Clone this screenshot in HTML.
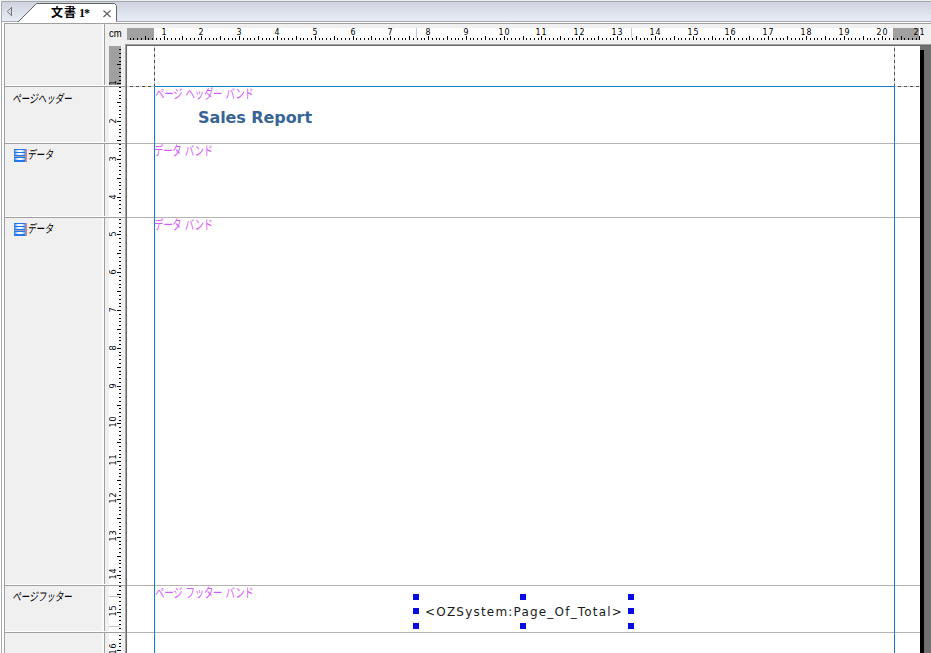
<!DOCTYPE html>
<html lang="ja"><head><meta charset="utf-8"><title>文書 1</title>
<style>
html,body{margin:0;padding:0}
body{width:931px;height:653px;overflow:hidden;background:#fff;position:relative;font-family:"Liberation Sans","Noto Sans CJK JP",sans-serif}
div,span,svg{position:absolute;box-sizing:border-box}
#top0{left:0;top:0;width:931px;height:1px;background:#ececec}
#bl{left:1px;top:1px;width:1px;height:653px;background:#a6aab7}
#bt{left:1px;top:1px;width:931px;height:1px;background:#a6aab7}
#tabbar{left:2px;top:2px;width:931px;height:19px;background:linear-gradient(#cfd3de,#e8ecf5)}
#tabline{left:2px;top:21px;width:931px;height:1px;background:#a6aab7}
#tabsvg{left:0;top:0}
#tabtxt{left:51px;top:3.5px;height:18px;line-height:18px;font-size:12px;letter-spacing:1px;font-weight:bold;color:#000;white-space:nowrap;font-family:"Liberation Serif","Noto Sans CJK JP",sans-serif}
#panel{left:4px;top:23px;width:931px;height:653px;background:#f0f0f0;border-left:1px solid #a0a0a0;border-top:1px solid #a0a0a0}
.sepw{left:5px;width:120px;height:1px;background:#fff}
.sepg{left:5px;width:120px;height:1px;background:#a0a0a0}
.vsp{left:102px;width:3px;border-left:2px solid #fafafa;border-right:1px solid #a0a0a0}
.bl{font-size:12px;color:#000;white-space:nowrap;line-height:12px;font-family:"Liberation Sans","Noto Sans CJK JP",sans-serif;transform-origin:0 100%;transform:skewX(-10deg) scaleX(.71)}
#hr{left:127px;top:28px;width:804px;height:12px}
#hr .w{left:0;top:0;width:793px;height:12px;background:#fff}
#hr .g{background:#a0a0a0;top:0;height:12px}
#hr .sel{top:0;width:1px;height:10px;background:#c8c8c8}
.hn{top:-1.11px;width:20px;text-align:center;font-family:"DejaVu Sans","Liberation Sans",sans-serif;font-size:9px;line-height:10px;color:#000;letter-spacing:1.2px;text-indent:1.2px;transform:scaleX(.88)}
#cm{left:109px;top:29px;font-size:10px;line-height:10px;color:#000;transform:scaleX(.95);transform-origin:0 0}
#vr{left:109px;top:46px;width:12px;height:607px;background:#fff;overflow:hidden}
#vr .g{background:#a0a0a0;left:0;width:12px;top:0;height:39px}
#vr .sel{left:0;height:1px;width:11px;background:#c4c4c4}
.vn{left:-6px;width:20px;height:20px;line-height:20px;text-align:center;font-family:"DejaVu Sans","Liberation Sans",sans-serif;font-size:9px;color:#000;letter-spacing:1px;text-indent:1px;transform:rotate(-90deg) scaleX(.9)}
#ws{left:125px;top:44px;width:931px;height:653px;background:#707070;border-left:1px solid #a0a0a0;border-top:1px solid #a0a0a0}
#page{left:127px;top:46px;width:793px;height:653px;background:#fff}
#shadow{left:920px;top:50px;width:4px;height:653px;background:#000}
.dv{width:1px;background:repeating-linear-gradient(to bottom,#ccc 0 2px,#505050 2px 5px,#ccc 5px 6px)}
.dh{height:1px;background:repeating-linear-gradient(to right,#ccc 0 3px,#505050 3px 6px)}
.blue{background:#1080c8}
.psep{left:127px;width:793px;height:1px;background:#b4b4b4}
.band{transform:scaleX(.73);letter-spacing:-.42px;word-spacing:1.2px;font-size:13px;line-height:12px;color:#d65cf9;white-space:nowrap;font-weight:400;font-family:"Liberation Sans","Noto Sans CJK JP",sans-serif;transform-origin:0 0}
#title{left:198px;top:106px;font-family:"DejaVu Sans","Liberation Sans",sans-serif;font-weight:bold;font-size:16px;letter-spacing:-.08px;line-height:24px;color:#396496;white-space:nowrap}
#oz{left:425px;top:602px;letter-spacing:1.2px;font-family:"DejaVu Sans","Liberation Sans",sans-serif;font-size:12px;line-height:20px;color:#1a1a1a;white-space:nowrap}
.hd{width:6px;height:6px;background:#0a0ae6}
</style></head><body>
<div id="top0"></div><div id="bt"></div><div id="bl"></div>
<div id="tabbar"></div><div id="tabline"></div>
<svg id="tabsvg" width="140" height="24" viewBox="0 0 140 24">
<polygon points="18,22.5 37,3.5 114.5,3.5 116.5,5.5 116.5,22.5" fill="#fff"/>
<polyline points="18,22 36.5,3.5 114.5,3.5 116.5,5.5 116.5,21.5" fill="none" stroke="#666" stroke-width="1"/>
<polygon points="7.3,11.5 11.5,7.3 11.5,15.7" fill="none" stroke="#707070" stroke-width="1"/>
<path d="M103.5 10.5 L110.5 17 M110.5 10.5 L103.5 17" stroke="#666" stroke-width="1.3" fill="none"/>
</svg>
<div id="tabtxt">文書 <span style="position:static;letter-spacing:-1px;font-size:12px;margin-left:-2px">1*</span></div>
<div id="panel"></div>
<div class="vsp" style="top:24px;height:61px"></div><div class="vsp" style="top:87px;height:55px"></div><div class="vsp" style="top:144px;height:72px"></div><div class="vsp" style="top:218px;height:366px"></div><div class="vsp" style="top:586px;height:45px"></div><div class="vsp" style="top:633px;height:20px"></div>
<div id="cm">cm</div>
<div id="hr"><div class="w"></div><div class="g" style="left:0;width:27px"></div><div class="g" style="left:766px;width:26px"></div>
<div class="sel" style="left:289px"></div><div class="sel" style="left:504px"></div>
<svg width="794" height="12" viewBox="127 0 794 12" shape-rendering="crispEdges" fill="#000" style="left:0;top:0"><rect x="130" y="10" width="1" height="2"/><rect x="133" y="10" width="1" height="2"/><rect x="137" y="10" width="1" height="2"/><rect x="141" y="10" width="1" height="2"/><rect x="145" y="8" width="1" height="4"/><rect x="148" y="10" width="1" height="2"/><rect x="152" y="10" width="1" height="2"/><rect x="156" y="10" width="1" height="2"/><rect x="160" y="10" width="1" height="2"/><rect x="164" y="8" width="1" height="4"/><rect x="167" y="10" width="1" height="2"/><rect x="171" y="10" width="1" height="2"/><rect x="175" y="10" width="1" height="2"/><rect x="179" y="10" width="1" height="2"/><rect x="182" y="8" width="1" height="4"/><rect x="186" y="10" width="1" height="2"/><rect x="190" y="10" width="1" height="2"/><rect x="194" y="10" width="1" height="2"/><rect x="198" y="10" width="1" height="2"/><rect x="201" y="8" width="1" height="4"/><rect x="205" y="10" width="1" height="2"/><rect x="209" y="10" width="1" height="2"/><rect x="213" y="10" width="1" height="2"/><rect x="216" y="10" width="1" height="2"/><rect x="220" y="8" width="1" height="4"/><rect x="224" y="10" width="1" height="2"/><rect x="228" y="10" width="1" height="2"/><rect x="232" y="10" width="1" height="2"/><rect x="235" y="10" width="1" height="2"/><rect x="239" y="8" width="1" height="4"/><rect x="243" y="10" width="1" height="2"/><rect x="247" y="10" width="1" height="2"/><rect x="250" y="10" width="1" height="2"/><rect x="254" y="10" width="1" height="2"/><rect x="258" y="8" width="1" height="4"/><rect x="262" y="10" width="1" height="2"/><rect x="266" y="10" width="1" height="2"/><rect x="269" y="10" width="1" height="2"/><rect x="273" y="10" width="1" height="2"/><rect x="277" y="8" width="1" height="4"/><rect x="281" y="10" width="1" height="2"/><rect x="284" y="10" width="1" height="2"/><rect x="288" y="10" width="1" height="2"/><rect x="292" y="10" width="1" height="2"/><rect x="296" y="8" width="1" height="4"/><rect x="300" y="10" width="1" height="2"/><rect x="303" y="10" width="1" height="2"/><rect x="307" y="10" width="1" height="2"/><rect x="311" y="10" width="1" height="2"/><rect x="315" y="8" width="1" height="4"/><rect x="319" y="10" width="1" height="2"/><rect x="322" y="10" width="1" height="2"/><rect x="326" y="10" width="1" height="2"/><rect x="330" y="10" width="1" height="2"/><rect x="334" y="8" width="1" height="4"/><rect x="337" y="10" width="1" height="2"/><rect x="341" y="10" width="1" height="2"/><rect x="345" y="10" width="1" height="2"/><rect x="349" y="10" width="1" height="2"/><rect x="353" y="8" width="1" height="4"/><rect x="356" y="10" width="1" height="2"/><rect x="360" y="10" width="1" height="2"/><rect x="364" y="10" width="1" height="2"/><rect x="368" y="10" width="1" height="2"/><rect x="371" y="8" width="1" height="4"/><rect x="375" y="10" width="1" height="2"/><rect x="379" y="10" width="1" height="2"/><rect x="383" y="10" width="1" height="2"/><rect x="387" y="10" width="1" height="2"/><rect x="390" y="8" width="1" height="4"/><rect x="394" y="10" width="1" height="2"/><rect x="398" y="10" width="1" height="2"/><rect x="402" y="10" width="1" height="2"/><rect x="405" y="10" width="1" height="2"/><rect x="409" y="8" width="1" height="4"/><rect x="413" y="10" width="1" height="2"/><rect x="417" y="10" width="1" height="2"/><rect x="421" y="10" width="1" height="2"/><rect x="424" y="10" width="1" height="2"/><rect x="428" y="8" width="1" height="4"/><rect x="432" y="10" width="1" height="2"/><rect x="436" y="10" width="1" height="2"/><rect x="439" y="10" width="1" height="2"/><rect x="443" y="10" width="1" height="2"/><rect x="447" y="8" width="1" height="4"/><rect x="451" y="10" width="1" height="2"/><rect x="455" y="10" width="1" height="2"/><rect x="458" y="10" width="1" height="2"/><rect x="462" y="10" width="1" height="2"/><rect x="466" y="8" width="1" height="4"/><rect x="470" y="10" width="1" height="2"/><rect x="473" y="10" width="1" height="2"/><rect x="477" y="10" width="1" height="2"/><rect x="481" y="10" width="1" height="2"/><rect x="485" y="8" width="1" height="4"/><rect x="489" y="10" width="1" height="2"/><rect x="492" y="10" width="1" height="2"/><rect x="496" y="10" width="1" height="2"/><rect x="500" y="10" width="1" height="2"/><rect x="504" y="8" width="1" height="4"/><rect x="507" y="10" width="1" height="2"/><rect x="511" y="10" width="1" height="2"/><rect x="515" y="10" width="1" height="2"/><rect x="519" y="10" width="1" height="2"/><rect x="523" y="8" width="1" height="4"/><rect x="526" y="10" width="1" height="2"/><rect x="530" y="10" width="1" height="2"/><rect x="534" y="10" width="1" height="2"/><rect x="538" y="10" width="1" height="2"/><rect x="541" y="8" width="1" height="4"/><rect x="545" y="10" width="1" height="2"/><rect x="549" y="10" width="1" height="2"/><rect x="553" y="10" width="1" height="2"/><rect x="557" y="10" width="1" height="2"/><rect x="560" y="8" width="1" height="4"/><rect x="564" y="10" width="1" height="2"/><rect x="568" y="10" width="1" height="2"/><rect x="572" y="10" width="1" height="2"/><rect x="576" y="10" width="1" height="2"/><rect x="579" y="8" width="1" height="4"/><rect x="583" y="10" width="1" height="2"/><rect x="587" y="10" width="1" height="2"/><rect x="591" y="10" width="1" height="2"/><rect x="594" y="10" width="1" height="2"/><rect x="598" y="8" width="1" height="4"/><rect x="602" y="10" width="1" height="2"/><rect x="606" y="10" width="1" height="2"/><rect x="610" y="10" width="1" height="2"/><rect x="613" y="10" width="1" height="2"/><rect x="617" y="8" width="1" height="4"/><rect x="621" y="10" width="1" height="2"/><rect x="625" y="10" width="1" height="2"/><rect x="628" y="10" width="1" height="2"/><rect x="632" y="10" width="1" height="2"/><rect x="636" y="8" width="1" height="4"/><rect x="640" y="10" width="1" height="2"/><rect x="644" y="10" width="1" height="2"/><rect x="647" y="10" width="1" height="2"/><rect x="651" y="10" width="1" height="2"/><rect x="655" y="8" width="1" height="4"/><rect x="659" y="10" width="1" height="2"/><rect x="662" y="10" width="1" height="2"/><rect x="666" y="10" width="1" height="2"/><rect x="670" y="10" width="1" height="2"/><rect x="674" y="8" width="1" height="4"/><rect x="678" y="10" width="1" height="2"/><rect x="681" y="10" width="1" height="2"/><rect x="685" y="10" width="1" height="2"/><rect x="689" y="10" width="1" height="2"/><rect x="693" y="8" width="1" height="4"/><rect x="696" y="10" width="1" height="2"/><rect x="700" y="10" width="1" height="2"/><rect x="704" y="10" width="1" height="2"/><rect x="708" y="10" width="1" height="2"/><rect x="712" y="8" width="1" height="4"/><rect x="715" y="10" width="1" height="2"/><rect x="719" y="10" width="1" height="2"/><rect x="723" y="10" width="1" height="2"/><rect x="727" y="10" width="1" height="2"/><rect x="730" y="8" width="1" height="4"/><rect x="734" y="10" width="1" height="2"/><rect x="738" y="10" width="1" height="2"/><rect x="742" y="10" width="1" height="2"/><rect x="746" y="10" width="1" height="2"/><rect x="749" y="8" width="1" height="4"/><rect x="753" y="10" width="1" height="2"/><rect x="757" y="10" width="1" height="2"/><rect x="761" y="10" width="1" height="2"/><rect x="764" y="10" width="1" height="2"/><rect x="768" y="8" width="1" height="4"/><rect x="772" y="10" width="1" height="2"/><rect x="776" y="10" width="1" height="2"/><rect x="780" y="10" width="1" height="2"/><rect x="783" y="10" width="1" height="2"/><rect x="787" y="8" width="1" height="4"/><rect x="791" y="10" width="1" height="2"/><rect x="795" y="10" width="1" height="2"/><rect x="799" y="10" width="1" height="2"/><rect x="802" y="10" width="1" height="2"/><rect x="806" y="8" width="1" height="4"/><rect x="810" y="10" width="1" height="2"/><rect x="814" y="10" width="1" height="2"/><rect x="817" y="10" width="1" height="2"/><rect x="821" y="10" width="1" height="2"/><rect x="825" y="8" width="1" height="4"/><rect x="829" y="10" width="1" height="2"/><rect x="833" y="10" width="1" height="2"/><rect x="836" y="10" width="1" height="2"/><rect x="840" y="10" width="1" height="2"/><rect x="844" y="8" width="1" height="4"/><rect x="848" y="10" width="1" height="2"/><rect x="851" y="10" width="1" height="2"/><rect x="855" y="10" width="1" height="2"/><rect x="859" y="10" width="1" height="2"/><rect x="863" y="8" width="1" height="4"/><rect x="867" y="10" width="1" height="2"/><rect x="870" y="10" width="1" height="2"/><rect x="874" y="10" width="1" height="2"/><rect x="878" y="10" width="1" height="2"/><rect x="882" y="8" width="1" height="4"/><rect x="885" y="10" width="1" height="2"/><rect x="889" y="10" width="1" height="2"/><rect x="893" y="10" width="1" height="2"/><rect x="897" y="10" width="1" height="2"/><rect x="901" y="8" width="1" height="4"/><rect x="904" y="10" width="1" height="2"/><rect x="908" y="10" width="1" height="2"/><rect x="912" y="10" width="1" height="2"/><rect x="916" y="10" width="1" height="2"/><rect x="919" y="8" width="1" height="4"/></svg>
<span class="hn" style="left:27.0px">1</span><span class="hn" style="left:64.0px">2</span><span class="hn" style="left:102.0px">3</span><span class="hn" style="left:140.0px">4</span><span class="hn" style="left:178.0px">5</span><span class="hn" style="left:216.0px">6</span><span class="hn" style="left:253.0px">7</span><span class="hn" style="left:291.0px">8</span><span class="hn" style="left:329.0px">9</span><span class="hn" style="left:367.0px">10</span><span class="hn" style="left:404.0px">11</span><span class="hn" style="left:442.0px">12</span><span class="hn" style="left:480.0px">13</span><span class="hn" style="left:518.0px">14</span><span class="hn" style="left:556.0px">15</span><span class="hn" style="left:593.0px">16</span><span class="hn" style="left:631.0px">17</span><span class="hn" style="left:669.0px">18</span><span class="hn" style="left:707.0px">19</span><span class="hn" style="left:745.0px">20</span><span class="hn" style="left:782.0px">21</span>
</div>
<div id="vr"><div class="g"></div>
<div class="sel" style="top:550px"></div><div class="sel" style="top:580px"></div>
<svg width="12" height="607" shape-rendering="crispEdges" fill="#000" style="left:0;top:0"><rect x="10" y="3" width="2" height="1"/><rect x="10" y="7" width="2" height="1"/><rect x="10" y="11" width="2" height="1"/><rect x="10" y="15" width="2" height="1"/><rect x="8" y="18" width="4" height="1"/><rect x="10" y="22" width="2" height="1"/><rect x="10" y="26" width="2" height="1"/><rect x="10" y="30" width="2" height="1"/><rect x="10" y="34" width="2" height="1"/><rect x="8" y="37" width="4" height="1"/><rect x="10" y="41" width="2" height="1"/><rect x="10" y="45" width="2" height="1"/><rect x="10" y="49" width="2" height="1"/><rect x="10" y="52" width="2" height="1"/><rect x="8" y="56" width="4" height="1"/><rect x="10" y="60" width="2" height="1"/><rect x="10" y="64" width="2" height="1"/><rect x="10" y="68" width="2" height="1"/><rect x="10" y="71" width="2" height="1"/><rect x="8" y="75" width="4" height="1"/><rect x="10" y="79" width="2" height="1"/><rect x="10" y="83" width="2" height="1"/><rect x="10" y="86" width="2" height="1"/><rect x="10" y="90" width="2" height="1"/><rect x="8" y="94" width="4" height="1"/><rect x="10" y="98" width="2" height="1"/><rect x="10" y="102" width="2" height="1"/><rect x="10" y="105" width="2" height="1"/><rect x="10" y="109" width="2" height="1"/><rect x="8" y="113" width="4" height="1"/><rect x="10" y="117" width="2" height="1"/><rect x="10" y="120" width="2" height="1"/><rect x="10" y="124" width="2" height="1"/><rect x="10" y="128" width="2" height="1"/><rect x="8" y="132" width="4" height="1"/><rect x="10" y="136" width="2" height="1"/><rect x="10" y="139" width="2" height="1"/><rect x="10" y="143" width="2" height="1"/><rect x="10" y="147" width="2" height="1"/><rect x="8" y="151" width="4" height="1"/><rect x="10" y="154" width="2" height="1"/><rect x="10" y="158" width="2" height="1"/><rect x="10" y="162" width="2" height="1"/><rect x="10" y="166" width="2" height="1"/><rect x="8" y="170" width="4" height="1"/><rect x="10" y="173" width="2" height="1"/><rect x="10" y="177" width="2" height="1"/><rect x="10" y="181" width="2" height="1"/><rect x="10" y="185" width="2" height="1"/><rect x="8" y="188" width="4" height="1"/><rect x="10" y="192" width="2" height="1"/><rect x="10" y="196" width="2" height="1"/><rect x="10" y="200" width="2" height="1"/><rect x="10" y="204" width="2" height="1"/><rect x="8" y="207" width="4" height="1"/><rect x="10" y="211" width="2" height="1"/><rect x="10" y="215" width="2" height="1"/><rect x="10" y="219" width="2" height="1"/><rect x="10" y="222" width="2" height="1"/><rect x="8" y="226" width="4" height="1"/><rect x="10" y="230" width="2" height="1"/><rect x="10" y="234" width="2" height="1"/><rect x="10" y="238" width="2" height="1"/><rect x="10" y="241" width="2" height="1"/><rect x="8" y="245" width="4" height="1"/><rect x="10" y="249" width="2" height="1"/><rect x="10" y="253" width="2" height="1"/><rect x="10" y="257" width="2" height="1"/><rect x="10" y="260" width="2" height="1"/><rect x="8" y="264" width="4" height="1"/><rect x="10" y="268" width="2" height="1"/><rect x="10" y="272" width="2" height="1"/><rect x="10" y="275" width="2" height="1"/><rect x="10" y="279" width="2" height="1"/><rect x="8" y="283" width="4" height="1"/><rect x="10" y="287" width="2" height="1"/><rect x="10" y="291" width="2" height="1"/><rect x="10" y="294" width="2" height="1"/><rect x="10" y="298" width="2" height="1"/><rect x="8" y="302" width="4" height="1"/><rect x="10" y="306" width="2" height="1"/><rect x="10" y="309" width="2" height="1"/><rect x="10" y="313" width="2" height="1"/><rect x="10" y="317" width="2" height="1"/><rect x="8" y="321" width="4" height="1"/><rect x="10" y="325" width="2" height="1"/><rect x="10" y="328" width="2" height="1"/><rect x="10" y="332" width="2" height="1"/><rect x="10" y="336" width="2" height="1"/><rect x="8" y="340" width="4" height="1"/><rect x="10" y="343" width="2" height="1"/><rect x="10" y="347" width="2" height="1"/><rect x="10" y="351" width="2" height="1"/><rect x="10" y="355" width="2" height="1"/><rect x="8" y="359" width="4" height="1"/><rect x="10" y="362" width="2" height="1"/><rect x="10" y="366" width="2" height="1"/><rect x="10" y="370" width="2" height="1"/><rect x="10" y="374" width="2" height="1"/><rect x="8" y="377" width="4" height="1"/><rect x="10" y="381" width="2" height="1"/><rect x="10" y="385" width="2" height="1"/><rect x="10" y="389" width="2" height="1"/><rect x="10" y="393" width="2" height="1"/><rect x="8" y="396" width="4" height="1"/><rect x="10" y="400" width="2" height="1"/><rect x="10" y="404" width="2" height="1"/><rect x="10" y="408" width="2" height="1"/><rect x="10" y="411" width="2" height="1"/><rect x="8" y="415" width="4" height="1"/><rect x="10" y="419" width="2" height="1"/><rect x="10" y="423" width="2" height="1"/><rect x="10" y="427" width="2" height="1"/><rect x="10" y="430" width="2" height="1"/><rect x="8" y="434" width="4" height="1"/><rect x="10" y="438" width="2" height="1"/><rect x="10" y="442" width="2" height="1"/><rect x="10" y="445" width="2" height="1"/><rect x="10" y="449" width="2" height="1"/><rect x="8" y="453" width="4" height="1"/><rect x="10" y="457" width="2" height="1"/><rect x="10" y="461" width="2" height="1"/><rect x="10" y="464" width="2" height="1"/><rect x="10" y="468" width="2" height="1"/><rect x="8" y="472" width="4" height="1"/><rect x="10" y="476" width="2" height="1"/><rect x="10" y="480" width="2" height="1"/><rect x="10" y="483" width="2" height="1"/><rect x="10" y="487" width="2" height="1"/><rect x="8" y="491" width="4" height="1"/><rect x="10" y="495" width="2" height="1"/><rect x="10" y="498" width="2" height="1"/><rect x="10" y="502" width="2" height="1"/><rect x="10" y="506" width="2" height="1"/><rect x="8" y="510" width="4" height="1"/><rect x="10" y="514" width="2" height="1"/><rect x="10" y="517" width="2" height="1"/><rect x="10" y="521" width="2" height="1"/><rect x="10" y="525" width="2" height="1"/><rect x="8" y="529" width="4" height="1"/><rect x="10" y="532" width="2" height="1"/><rect x="10" y="536" width="2" height="1"/><rect x="10" y="540" width="2" height="1"/><rect x="10" y="544" width="2" height="1"/><rect x="8" y="548" width="4" height="1"/><rect x="10" y="551" width="2" height="1"/><rect x="10" y="555" width="2" height="1"/><rect x="10" y="559" width="2" height="1"/><rect x="10" y="563" width="2" height="1"/><rect x="8" y="566" width="4" height="1"/><rect x="10" y="570" width="2" height="1"/><rect x="10" y="574" width="2" height="1"/><rect x="10" y="578" width="2" height="1"/><rect x="10" y="582" width="2" height="1"/><rect x="8" y="585" width="4" height="1"/><rect x="10" y="589" width="2" height="1"/><rect x="10" y="593" width="2" height="1"/><rect x="10" y="597" width="2" height="1"/><rect x="10" y="600" width="2" height="1"/><rect x="8" y="604" width="4" height="1"/></svg>
<span class="vn" style="top:27.0px">1</span><span class="vn" style="top:65.0px">2</span><span class="vn" style="top:103.0px">3</span><span class="vn" style="top:141.0px">4</span><span class="vn" style="top:178.0px">5</span><span class="vn" style="top:216.0px">6</span><span class="vn" style="top:254.0px">7</span><span class="vn" style="top:292.0px">8</span><span class="vn" style="top:330.0px">9</span><span class="vn" style="top:366.0px">10</span><span class="vn" style="top:404.0px">11</span><span class="vn" style="top:442.0px">12</span><span class="vn" style="top:480.0px">13</span><span class="vn" style="top:518.0px">14</span><span class="vn" style="top:555.0px">15</span><span class="vn" style="top:593.0px">16</span>
</div>
<div class="sepw" style="top:85px"></div><div class="sepg" style="top:86px"></div><div class="sepw" style="top:142px"></div><div class="sepg" style="top:143px"></div><div class="sepw" style="top:216px"></div><div class="sepg" style="top:217px"></div><div class="sepw" style="top:584px"></div><div class="sepg" style="top:585px"></div><div class="sepw" style="top:631px"></div><div class="sepg" style="top:632px"></div>
<div class="bl" style="left:12px;top:92.5px">ページヘッダー</div>
<div class="bl" style="left:27px;top:148.5px">データ</div>
<div class="bl" style="left:27px;top:222.5px">データ</div>
<div class="bl" style="left:12px;top:590.5px">ページフッター</div>
<svg width="0" height="0" style="left:0;top:0"><defs><linearGradient id="hl" x1="0" x2="1" y1="0" y2="0"><stop offset="0" stop-color="#2078f0"/><stop offset=".22" stop-color="#b8d6ff"/><stop offset=".42" stop-color="#fff"/><stop offset=".58" stop-color="#fff"/><stop offset=".78" stop-color="#b8d6ff"/><stop offset="1" stop-color="#2078f0"/></linearGradient></defs></svg>
<svg class="ic" style="left:14px;top:149px" width="13" height="13" viewBox="0 0 13 13" shape-rendering="crispEdges"><rect width="12" height="13" fill="#2078f0"/><rect x="0" y="1" width="12" height="2" fill="url(#hl)"/><rect x="0" y="4" width="12" height="2" fill="url(#hl)"/><rect x="0" y="9" width="12" height="2" fill="url(#hl)"/><rect y="7" width="12" height="1" fill="#a0a0aa"/><rect x="11" width="1" height="13" fill="#8a94b0"/><rect x="12" width="1" height="13" fill="#f07880"/></svg>
<svg class="ic" style="left:14px;top:223px" width="13" height="13" viewBox="0 0 13 13" shape-rendering="crispEdges"><rect width="12" height="13" fill="#2078f0"/><rect x="0" y="1" width="12" height="2" fill="url(#hl)"/><rect x="0" y="4" width="12" height="2" fill="url(#hl)"/><rect x="0" y="9" width="12" height="2" fill="url(#hl)"/><rect y="7" width="12" height="1" fill="#a0a0aa"/><rect x="11" width="1" height="13" fill="#8a94b0"/><rect x="12" width="1" height="13" fill="#f07880"/></svg>
<div id="ws"></div>
<div style="left:126px;top:45px;width:931px;height:1px;background:#696969"></div>
<div style="left:126px;top:45px;width:1px;height:653px;background:#696969"></div>
<div id="page"></div>
<div id="shadow"></div>
<div class="psep" style="top:143px"></div><div class="psep" style="top:217px"></div><div class="psep" style="top:585px"></div><div class="psep" style="top:632px"></div>
<div class="dv" style="left:154px;top:46px;height:40px"></div>
<div class="dh" style="left:127px;top:86px;width:27px"></div>
<div class="dv" style="left:894px;top:46px;height:40px"></div>
<div class="dh" style="left:895px;top:86px;width:25px"></div>
<div class="blue" style="left:154px;top:86px;width:741px;height:1px"></div>
<div class="blue" style="left:154px;top:86px;width:1px;height:653px"></div>
<div class="blue" style="left:894px;top:86px;width:1px;height:653px"></div>
<div class="band" style="left:155px;top:88px">ページ ヘッダー バンド</div>
<div class="band" style="left:154px;top:145px">データ バンド</div>
<div class="band" style="left:154px;top:219px">データ バンド</div>
<div class="band" style="left:155px;top:587px">ページ フッター バンド</div>
<div id="title">Sales Report</div>
<div id="oz">&lt;OZSystem:Page_Of_Total&gt;</div>
<div class="hd" style="left:413px;top:594px"></div><div class="hd" style="left:413px;top:608px"></div><div class="hd" style="left:413px;top:623px"></div><div class="hd" style="left:520px;top:594px"></div><div class="hd" style="left:520px;top:623px"></div><div class="hd" style="left:628px;top:594px"></div><div class="hd" style="left:628px;top:608px"></div><div class="hd" style="left:628px;top:623px"></div>
</body></html>
